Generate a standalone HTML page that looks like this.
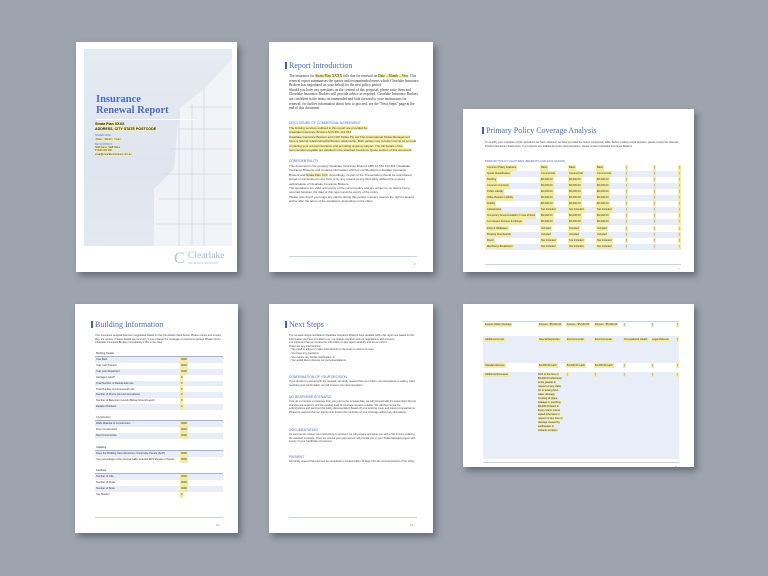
<!DOCTYPE html>
<html><head><meta charset="utf-8"><style>
*{margin:0;padding:0;box-sizing:border-box}
body{width:768px;height:576px;background:#9ea4ae;position:relative;overflow:hidden;font-family:"Liberation Sans",sans-serif}
.pg{position:absolute;background:#fff;box-shadow:3px 4px 6px rgba(40,45,55,.45);overflow:hidden}
.a{position:absolute}
.h{font-family:"Liberation Serif",serif;color:#4a6ccc;font-size:8px;white-space:nowrap}
.bar{position:absolute;width:1.5px;background:#3e5fc4}
.t{position:absolute;font-size:3px;line-height:4.4px;color:#444}
.s{font-family:"Liberation Serif",serif;font-size:3.6px;line-height:4.6px;color:#333}
.sub{position:absolute;font-size:3.3px;color:#4a6ccc;white-space:nowrap}
.hl{background:#f7f2a8}
.fl{position:absolute;height:1px;background:#c8d2ef}
.pn{position:absolute;font-size:3px;color:#888}
.row{position:absolute;height:5.8px;font-size:2.6px;line-height:5.8px;color:#333;white-space:nowrap}
.row.b{background:#e9edf7}
.row span{position:absolute}
.y{background:#f3eda0;padding:0 1px}
</style></head><body>

<!-- Cover -->
<div class="pg" style="left:76px;top:42px;width:161px;height:230px">
 <div class="a" style="left:8px;top:7px;width:148px;height:197px;background:linear-gradient(180deg,#e6eaf2,#dfe4ee 60%,#e4e8f0)"></div>
 <svg class="a" style="left:8px;top:7px" width="148" height="197" viewBox="0 0 148 197">
  <polygon points="70,197 70,140 90,120 95,60 120,40 148,10 148,197" fill="#f2f4f8" opacity=".85"/>
  <g stroke="#d3d8e3" stroke-width=".8" fill="none">
   <path d="M85,100 H148 M80,125 H148 M75,150 H148 M72,175 H148 M95,80 H148 M105,58 H148"/>
   <path d="M95,60 V197 M120,40 V197 M108,55 V197"/>
  </g>
 </svg>
 <div class="a h" style="left:20px;top:52px;font-size:10.5px;line-height:11px;font-weight:bold">Insurance<br>Renewal Report</div>
 <div class="a" style="left:20px;top:77px;width:100px;height:.8px;background:#fff"></div>
 <div class="a" style="left:19px;top:80px;font-size:3.6px;line-height:4.6px;font-weight:bold;color:#222"><span class="hl">Strata Plan XXXX</span><br><span class="hl">ADDRESS, CITY STATE POSTCODE</span></div>
 <div class="a" style="left:19px;top:92px;font-size:2.4px;line-height:3.6px;color:#4a6ccc">ISSUED DATE<br><span class="hl" style="color:#333">&lt;Date&gt; &lt;Month&gt; &lt;Year&gt;</span></div>
 <div class="a" style="left:19px;top:101px;font-size:2.4px;line-height:3.2px;color:#4a6ccc">KEY CONTACT<br><span class="hl" style="color:#333">Staff Name, Staff Name<br>P 0000 000 000<br>email@clearlakeinsurance.com.au</span></div>
 <div class="a" style="left:98px;top:209px;font-family:'Liberation Serif',serif;font-size:16px;color:#b2bee2;line-height:16px">C</div>
 <div class="a" style="left:112px;top:209px;font-family:'Liberation Serif',serif;font-size:9.5px;color:#a9b6e0;line-height:10px">Clearlake</div>
 <div class="a" style="left:112px;top:220px;font-size:2.4px;color:#a9b6e0;letter-spacing:.2px">INSURANCE BROKERS</div>
</div>

<!-- Report intro -->
<div class="pg" style="left:269px;top:42px;width:164px;height:230px">
 <div class="bar" style="left:16px;top:20px;height:7px"></div>
 <div class="a h" style="left:20px;top:19px">Report Introduction</div>
 <div class="t s" style="left:20px;top:32px;width:130px">The insurance for <span class="hl">Strata Plan XXXX</span> falls due for renewal on <span class="hl">Date – Month – Year</span>. This renewal report summarises the quotes and recommended terms which Clearlake Insurance Brokers has negotiated on your behalf for the new policy period.<br>Should you have any questions on the content of this proposal, please raise them and Clearlake Insurance Brokers will provide advice as required. Clearlake Insurance Brokers are confident in the terms recommended and look forward to your instructions for renewal; for further information about how to proceed, see the "Next Steps" page at the end of this document.</div>
 <div class="sub" style="left:20px;top:79px">DISCLOSURE OF COMMERCIAL AGREEMENT</div>
 <div class="t" style="left:20px;top:84px;width:128px"><span class="hl">The broking services outlined in this report are provided by:</span><br><span class="hl">Clearlake Insurance Brokers ACN 651 113 861</span><br><span class="hl">Clearlake Insurance Brokers and CHU Strata Pty Ltd T/as International Strata Management have a referral relationship/distribution relationship. Both parties may receive income as a result of placing your annual insurance and providing ongoing support. The full details of the remuneration payable are detailed in the attached Insurance Quote section of this document.</span></div>
 <div class="sub" style="left:20px;top:117px">CONFIDENTIALITY</div>
 <div class="t" style="left:20px;top:122px;width:128px">This document is the property Clearlake Insurance Brokers ABN 14 651 113 861 (Clearlake Insurance Brokers) and contains information which is confidential to Clearlake Insurance Brokers and <span class="hl">Strata Plan XXX</span>. Accordingly, no part of the Presentation should be reproduced, stored or transmitted in any form or by any means to any third party without the express authorisation of Clearlake Insurance Brokers.<br>The quotations are valid until expiry of the current policy and are subject to no claims being reported between the date of this report and the expiry of the policy.<br>Please note that if you lodge any claims during this period, insurers reserve the right to amend and/or alter the terms of the quotations depending on the claim.</div>
 <div class="fl" style="left:20px;top:214px;width:128px"></div>
 <div class="pn" style="left:145px;top:220px">2</div>
</div>

<!-- Coverage analysis -->
<div class="pg" style="left:463px;top:109px;width:231px;height:163px">
 <div class="bar" style="left:19px;top:18px;height:7px"></div>
 <div class="a h" style="left:23px;top:17px">Primary Policy Coverage Analysis</div>
 <div class="t" style="left:22px;top:32px;width:195px;font-size:2.6px;line-height:3.6px">To simplify your evaluation of the quotations we have obtained, we have provided the below comparison table. Before making a final decision, please review the relevant Product Disclosure Statements. If you require any additional insurer documentation, please contact Clearlake Insurance Brokers.</div>
 <div class="sub" style="left:22px;top:50px;font-size:2.8px">PRIMARY POLICY FEATURES, BENEFITS AND EXCLUSIONS</div>
 <div id="t3"></div>
 <div class="fl" style="left:22px;top:155px;width:196px"></div>
 <div class="pn" style="left:215px;top:158px">7</div>
</div>

<!-- Building information -->
<div class="pg" style="left:75px;top:304px;width:163px;height:229px">
 <div class="bar" style="left:16px;top:17px;height:7px"></div>
 <div class="a h" style="left:20px;top:16px">Building Information</div>
 <div class="t" style="left:20px;top:30px;width:128px;font-size:2.6px;line-height:3.6px">Your insurance renewal has been negotiated based on the risk details noted below. Please review and ensure they are correct. If these details are incorrect, it may change the coverage or premiums quoted. Please inform Clearlake Insurance Brokers immediately if this is the case.</div>
 <div id="t4"></div>
 <div class="fl" style="left:20px;top:213px;width:128px"></div>
 <div class="pn" style="left:141px;top:219px">10</div>
</div>

<!-- Next steps -->
<div class="pg" style="left:269px;top:304px;width:164px;height:229px">
 <div class="bar" style="left:16px;top:17px;height:7px"></div>
 <div class="a h" style="left:20px;top:16px">Next Steps</div>
 <div class="t" style="left:20px;top:30px;width:128px;font-size:2.6px;line-height:3.6px">The renewal recommendations Clearlake Insurance Brokers have detailed within this report are based on the information you have provided to us, our market research and our negotiations with insurers.<br>It is important that you review the information in this report carefully and let us know if:<br>There are any inaccuracies;<br>&nbsp;• You need to adjust or make amendments to the level or options of cover;<br>&nbsp;• You have any questions;<br>&nbsp;• You require any further clarification; or<br>&nbsp;• You would like to discuss our recommendations.</div>
 <div class="sub" style="left:20px;top:71px">CONFIRMATION OF YOUR DECISION</div>
 <div class="t" style="left:20px;top:76px;width:128px;font-size:2.6px;line-height:3.6px">If you decide to proceed with the renewal, we kindly request that you confirm your acceptance in writing. Upon receiving your confirmation, we will process your documentation.</div>
 <div class="sub" style="left:20px;top:91px">NO RESPONSE SCENARIO</div>
 <div class="t" style="left:20px;top:96px;width:128px;font-size:2.6px;line-height:3.6px">If we do not receive a response from you prior to the renewal date, we will proceed with the assumption that no changes are required, and the existing level of coverage remains suitable. We will then renew the policy/policies and send out the policy documentation based off your expiring cover and insurer renewal terms. Please be assured that our priority is to ensure the continuity of your coverage without any disruptions.</div>
 <div class="sub" style="left:20px;top:124px">DOCUMENTATION</div>
 <div class="t" style="left:20px;top:129px;width:128px;font-size:2.6px;line-height:3.6px">As soon as we receive your instructions to proceed, we will prepare and issue you with a Tax Invoice outlining the selected coverage. Once we receive your payment we will provide you or your Strata Managing Agent with a copy of your Certificate of Currency.</div>
 <div class="sub" style="left:20px;top:151px">PAYMENT</div>
 <div class="t" style="left:20px;top:156px;width:128px;font-size:2.6px;line-height:3.6px">We kindly request that payment be completed or funded within 14 days from the commencement of the policy.</div>
 <div class="fl" style="left:20px;top:213px;width:128px"></div>
 <div class="pn" style="left:141px;top:219px">16</div>
</div>

<!-- Table continuation -->
<div class="pg" style="left:463px;top:304px;width:231px;height:163px">
 <div class="fl" style="left:20px;top:17px;width:196px"></div>
 <div class="row" style="left:20px;top:19px;width:196px;height:13px;line-height:4px"><span style="left:1px" class="y">Excess Water Damage</span><span style="left:55px" class="y">Excess - $5,000.00</span><span style="left:83px" class="y">Excess - $5,000.00</span><span style="left:111px" class="y">Excess - $5,000.00</span><span style="left:140px" class="y">[</span><span style="left:168px" class="y">[</span><span style="left:193px" class="y">[</span></div>
 <div class="row b" style="left:20px;top:32px;width:196px;height:27px;line-height:4px"><span style="left:1px;top:2px" class="y">Additional Limits</span><span style="left:55px;top:2px" class="y">Special Expenses</span><span style="left:83px;top:2px" class="y">Environmental</span><span style="left:111px;top:2px" class="y">Environmental</span><span style="left:140px;top:2px" class="y">Occupational Health</span><span style="left:168px;top:2px" class="y">Legal Defence</span><span style="left:193px;top:2px" class="y">[</span></div>
 <div class="row" style="left:20px;top:59px;width:196px;height:9px;line-height:5px"><span style="left:1px" class="y">Standard Excess</span><span style="left:55px" class="y">$1,000.00 each</span><span style="left:83px" class="y">$1,000.00 each</span><span style="left:111px" class="y">$1,000.00 each</span><span style="left:140px" class="y">[</span><span style="left:168px" class="y">[</span><span style="left:193px" class="y">[</span></div>
 <div class="row b" style="left:20px;top:68px;width:196px;height:87px;line-height:4px"><span style="left:1px;top:1px" class="y">Additional Excesses</span><span style="left:55px;top:1px;width:26px;white-space:normal;font-size:2.6px;line-height:4px"><span style="position:static;background:#f3eda0">50% of the loss or $5,000.00 whichever is the greater in respect of any claim for or arising from water damage, bursting of pipes, leakage or overflow, $5,000.00 Each & Every Claim unless stated otherwise in respect of any loss or damage caused by earthquake or volcanic eruption</span></span><span style="left:83px;top:1px" class="y">[</span><span style="left:111px;top:1px" class="y">[</span><span style="left:140px;top:1px" class="y">[</span><span style="left:168px;top:1px" class="y">[</span><span style="left:193px;top:1px" class="y">[</span></div>
 <div class="fl" style="left:20px;top:158px;width:196px"></div>
 <div class="pn" style="left:212px;top:161px">8</div>
</div>

<script>
(function(){
 var names=["Common Policy Features","Quote Classification","Building","Common Contents","Public Liability","Office Bearers Liability","Fidelity","Catastrophe","Temporary Accommodation / Loss of Rent","Lot Owners Fixtures & Fittings","Paint & Wallpaper","Floating Floorboards","Flood","Machinery Breakdown"];
 var v=["Basic","Commercial","$0,000.00","$0,000.00","$0,000.00","$0,000.00","$0,000.00","Not Included","$0,000.00","$0,000.00","Included","Included","Not Included","Not Included"];
 var h="";
 for(var i=0;i<14;i++){
  h+='<div class="row'+(i%2?' b':'')+'" style="left:22px;top:'+(56+i*6.05)+'px;width:196px;height:6px"><span style="left:1px" class="y">'+names[i]+'</span><span style="left:55px" class="y">'+v[i]+'</span><span style="left:83px" class="y">'+v[i]+'</span><span style="left:111px" class="y">'+v[i]+'</span><span style="left:140px" class="y">[</span><span style="left:168px" class="y">[</span><span style="left:193px" class="y">[</span></div>';
 }
 document.getElementById('t3').outerHTML=h;
 var groups=[["Building Details",49,["Year Built","Year Last Painted","Year Last Repainted","Heritage Listed?","Total Number of Residential Lots","Total Number of Commercial Lots","Number of Floors (Ground and above)","Number of Basement Levels (Below Ground Level)","Details of Defects"]],
  ["Construction",113,["Walls Material of Construction","Floor Construction","Roof Construction"]],
  ["Cladding",143,["Does the Building have Aluminium Composite Panels (ACP)","If so percentage of the internal walls, external EPS Panels or Panels"]],
  ["Facilities",166,["Number of Lifts","Number of Pools","Number of Spas","Car Stacker"]]];
 h="";
 groups.forEach(function(g){
  h+='<div class="a" style="left:21px;top:'+(g[1]-1)+'px;font-size:2.6px;color:#333">'+g[0]+'</div>';
  h+='<div class="fl" style="left:20px;top:'+(g[1]+3)+'px;width:128px;background:#9fb2e6"></div>';
  g[2].forEach(function(n,i){
   h+='<div class="row'+(i%2?'':' b')+'" style="left:20px;top:'+(g[1]+4+i*5.9)+'px;width:128px;height:5.9px;line-height:5.9px"><span style="left:1px">'+n+'</span><span style="left:85px" class="y">'+(i<3?'0000':'0')+'</span></div>';
  });
 });
 document.getElementById('t4').outerHTML=h;
})();
</script>
</body></html>
